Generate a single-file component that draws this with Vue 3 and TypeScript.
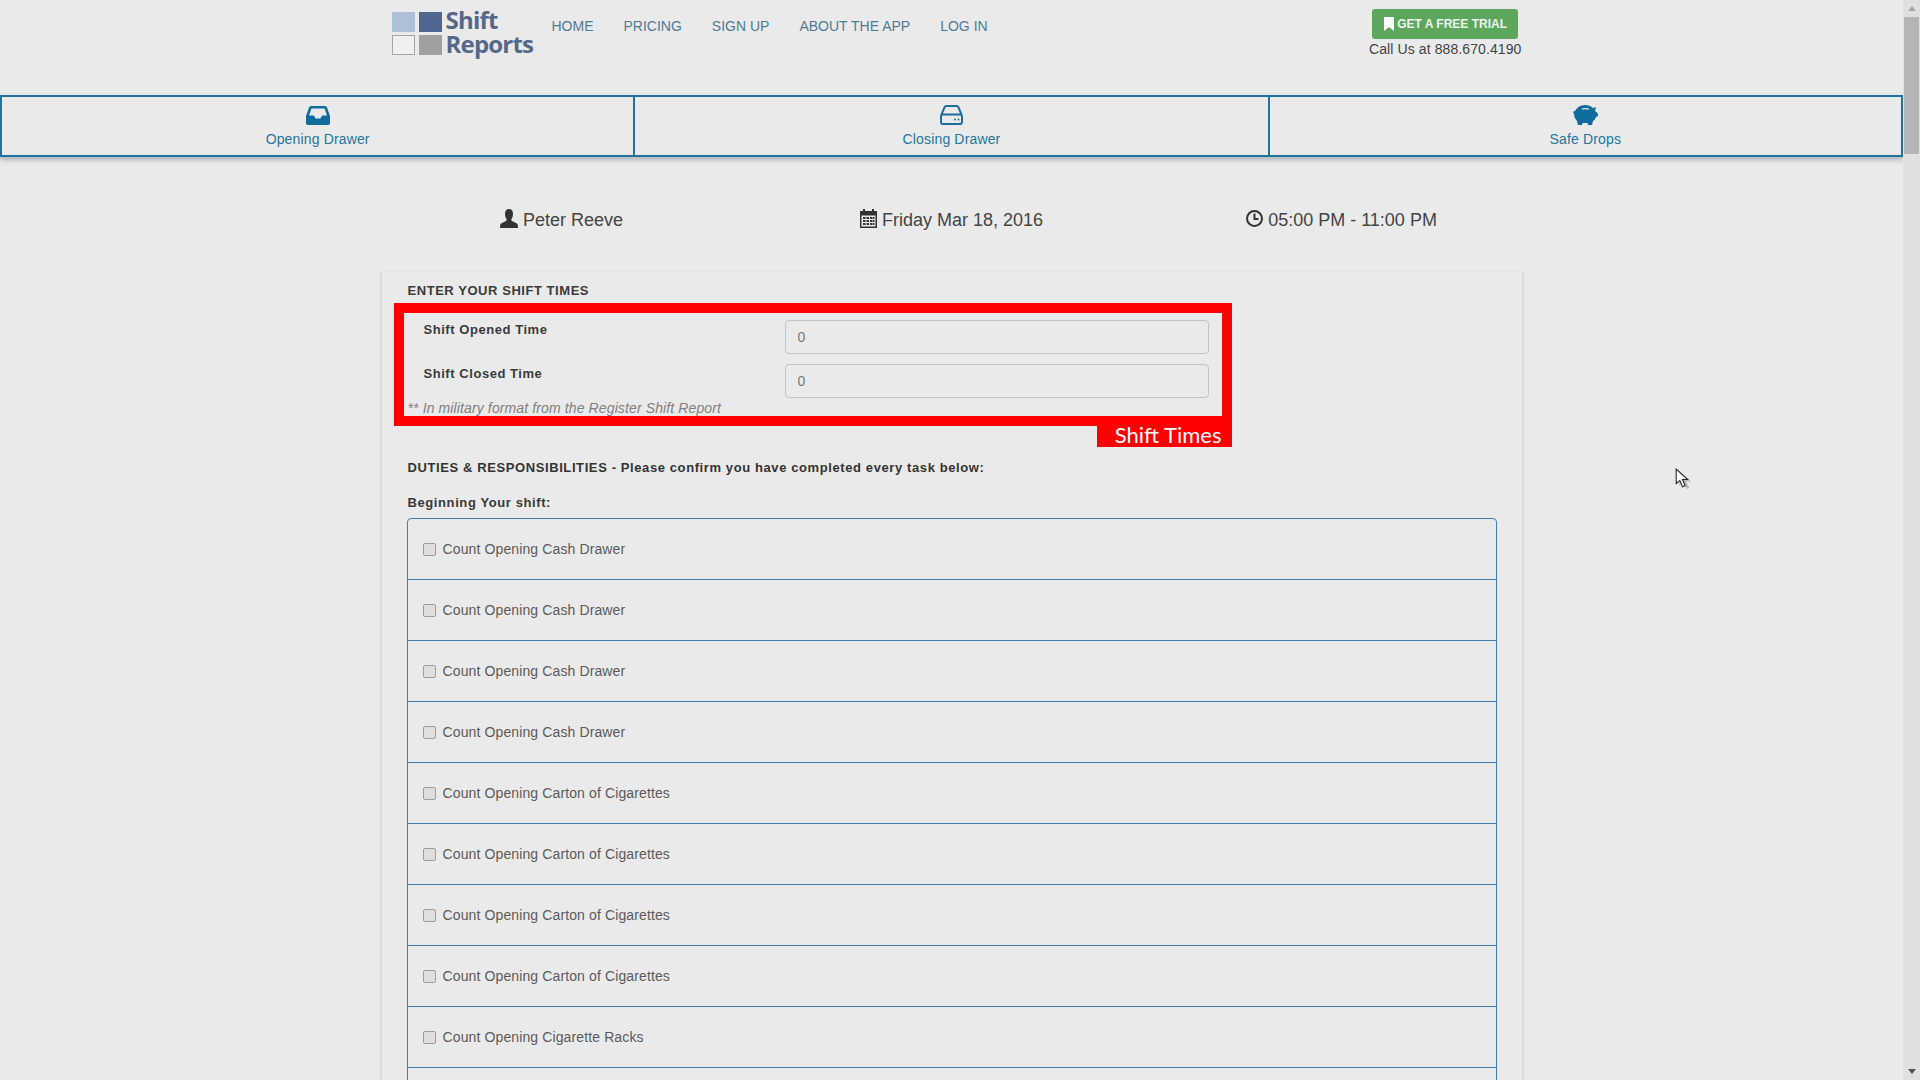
<script setup lang="ts">
const navLinks = ['HOME', 'PRICING', 'SIGN UP', 'ABOUT THE APP', 'LOG IN']

const tasks = [
  ...Array(4).fill('Count Opening Cash Drawer'),
  ...Array(4).fill('Count Opening Carton of Cigarettes'),
  ...Array(3).fill('Count Opening Cigarette Racks'),
] as string[]
</script>

<template>
  <div class="window">
    <div class="page">
      <header class="header">
        <div class="logo">
          <div class="logo-squares">
            <span class="sq sq-light"></span>
            <span class="sq sq-dark"></span>
            <span class="sq sq-empty"></span>
            <span class="sq sq-gray"></span>
          </div>
          <div class="logo-text">
            <span>Shift</span>
            <span>Reports</span>
          </div>
        </div>
        <nav class="nav">
          <a v-for="link in navLinks" :key="link" class="nav-link">{{ link }}</a>
        </nav>
        <div class="cta">
          <button class="trial-btn">
            <svg width="10" height="14" viewBox="0 0 10 14"><path d="M0 0h10v14L5 10 0 14z" fill="#fff" /></svg>
            GET A FREE TRIAL
          </button>
          <div class="call">Call Us at 888.670.4190</div>
        </div>
      </header>

      <div class="tabs">
        <div class="tab">
          <svg width="24" height="20" viewBox="0 0 24 20">
            <path
              fill="#0f6c9c"
              fill-rule="evenodd"
              d="M5 1h14q1.500 0 2 1.500L24 11v7q0 2-2 2H2q-2 0-2-2v-7l3-8.500Q3.500 1 5 1zM5.500 3.500 3 10.500h5l1.500 3h5l1.500-3h5l-2.500-7z"
            />
          </svg>
          <span>Opening Drawer</span>
        </div>
        <div class="tab">
          <svg width="23" height="20" viewBox="0 0 23 20">
            <path
              fill="none"
              stroke="#1b6f9c"
              stroke-width="2"
              d="M1.500 9.500 4.500 2.500Q5 1 6.500 1h10q1.500 0 2 1.500l3 7M3 9.500h17q2 0 2 2v5.500q0 2-2 2H3q-2 0-2-2v-5.500q0-2 2-2z"
            />
            <circle cx="15" cy="14.500" r="1" fill="#1b6f9c" />
            <circle cx="18.500" cy="14.500" r="1" fill="#1b6f9c" />
          </svg>
          <span>Closing Drawer</span>
        </div>
        <div class="tab">
          <svg width="25" height="20" viewBox="0 0 25 20">
            <path
              fill="#0f6c9c"
              fill-rule="evenodd"
              d="M12 0q5 0 8 3l3-1-1 4q2 1 3 3v2l-2 1q-1 3-3 4l-1 4h-4l-.5-2h-5l-.5 2H5l-1-4Q1 13 1 9L0 7q1-1 2-1 3-6 10-6zM9 3.500v1.300q3-1 7 0V3.500q-3.500-1-7 0z"
            />
          </svg>
          <span>Safe Drops</span>
        </div>
      </div>

      <main class="container">
        <div class="meta">
          <div class="meta-item">
            <svg width="18" height="19" viewBox="0 0 18 19">
              <path fill="#333" d="M9 0q4 0 4 5 0 3-1.500 5-.5 1 .5 2l5 2.500q1 .5 1 4.500H0q0-4 1-4.500L6 12q1-1 .5-2Q5 8 5 5q0-5 4-5z" />
            </svg>
            <span>Peter Reeve</span>
          </div>
          <div class="meta-item">
            <svg width="17" height="19" viewBox="0 0 17 19">
              <path fill="#333" fill-rule="evenodd" d="M3 0h2v2h7V0h2v2h3v17H0V2h3zM1.500 6.500v11h14v-11zM3 8h2.500v2H3zm3.500 0H9v2H6.500zM10 8h2.500v2H10zm3 0h1.500v2H13zM3 11h2.500v2H3zm3.500 0H9v2H6.500zM10 11h2.500v2H10zm3 0h1.500v2H13zM3 14h2.500v2H3zm3.500 0H9v2H6.500zM10 14h2.500v2H10zm3 0h1.500v2H13z" />
            </svg>
            <span>Friday Mar 18, 2016</span>
          </div>
          <div class="meta-item">
            <svg width="17" height="17" viewBox="0 0 17 17">
              <circle cx="8.500" cy="8.500" r="7.500" fill="none" stroke="#333" stroke-width="2" />
              <path d="M8.500 3.500v5.500h4" fill="none" stroke="#333" stroke-width="2" />
            </svg>
            <span>05:00 PM - 11:00 PM</span>
          </div>
        </div>

        <section class="card">
          <h4 class="section-title">ENTER YOUR SHIFT TIMES</h4>
          <div class="form-row">
            <label class="form-label">Shift Opened Time</label>
            <input class="form-input" type="text" value="0" />
          </div>
          <div class="form-row">
            <label class="form-label">Shift Closed Time</label>
            <input class="form-input" type="text" value="0" />
          </div>
          <p class="hint">** In military format from the Register Shift Report</p>

          <div class="callout">
            <span class="callout-label">Shift Times</span>
          </div>

          <h4 class="duties-title">DUTIES &amp; RESPONSIBILITIES - Please confirm you have completed every task below:</h4>
          <h5 class="list-title">Beginning Your shift:</h5>
          <ul class="task-list">
            <li v-for="(task, i) in tasks" :key="i" class="task">
              <input type="checkbox" disabled />
              <span>{{ task }}</span>
            </li>
          </ul>
        </section>
      </main>
    </div>

    <aside class="scrollbar">
      <span class="arrow arrow-up"></span>
      <span class="thumb"></span>
      <span class="arrow arrow-down"></span>
    </aside>

    <svg class="cursor" width="16" height="22" viewBox="0 0 15 21">
      <path d="M2 2v14l4-3 3 6 2.500-1-3-6h5z" fill="#888" opacity=".5" transform="translate(2 1)" />
      <path d="M1 1v14l3.500-3 2.500 6 2.500-1-2.500-6h5z" fill="#fff" stroke="#222" stroke-width="1" />
    </svg>
  </div>
</template>

<style>
html,
body {
  margin: 0;
  height: 100%;
  overflow: hidden;
  background: #eaeaea;
}
</style>

<style scoped>
.window {
  position: relative;
  display: flex;
  height: 1080px;
  overflow: hidden;
  background: #eaeaea;
  font-family: "Liberation Sans", Arial, sans-serif;
  color: #333;
}

.page {
  flex: 1;
  min-width: 0;
}

.header {
  box-sizing: border-box;
  width: 1170px;
  height: 95px;
  margin: 0 auto;
  padding: 12px 15px 0 25px;
  display: flex;
  align-items: flex-start;
}

.logo {
  display: flex;
  gap: 4px;
  width: 160px;
}

.logo-squares {
  display: grid;
  grid-template-columns: 23px 23px;
  grid-auto-rows: 20px;
  gap: 3px 4px;
}

.sq-light {
  background: #aec0d8;
}

.sq-dark {
  background: #4f6690;
}

.sq-empty {
  box-sizing: border-box;
  border: 1px solid #a5a5a5;
  background: #f0f0f0;
}

.sq-gray {
  background: #a0a0a0;
}

.logo-text {
  display: flex;
  flex-direction: column;
  margin-top: -4px;
  font-family: "Open Sans", sans-serif;
  font-weight: 700;
  font-size: 24px;
  line-height: 24px;
  letter-spacing: -0.8px;
  color: #56688a;
}

.nav {
  display: flex;
  gap: 30px;
  padding-top: 6px;
  flex: 1;
}

.nav-link {
  font-size: 14px;
  line-height: 16px;
  color: #4f7a97;
}

.cta {
  display: flex;
  flex-direction: column;
  align-items: center;
  margin-top: -3px;
  margin-right: 0;
}

.trial-btn {
  display: flex;
  align-items: center;
  gap: 3px;
  width: 146px;
  height: 30px;
  padding: 0 0 0 12px;
  border: none;
  border-radius: 3px;
  background: #5ca75c;
  color: #edf4ed;
  font-family: "Liberation Sans", Arial, sans-serif;
  font-size: 12px;
  font-weight: 700;
  letter-spacing: 0;
}

.call {
  margin-top: 2px;
  font-size: 14px;
  line-height: 16px;
  letter-spacing: 0.1px;
  color: #444;
}

.tabs {
  display: grid;
  grid-template-columns: repeat(3, 1fr);
  box-shadow: 0 3px 5px rgba(60, 80, 100, 0.35);
}

.tab {
  box-sizing: border-box;
  height: 62px;
  display: flex;
  flex-direction: column;
  align-items: center;
  padding-top: 8px;
  border: 2px solid #22739c;
  border-left-width: 1px;
  border-right-width: 1px;
  font-size: 14px;
  letter-spacing: 0.15px;
  color: #22769f;
}

.tab:first-child {
  border-left-width: 2px;
}

.tab:last-child {
  border-right-width: 2px;
}

.tab span {
  margin-top: 6px;
  line-height: 16px;
}

.container {
  box-sizing: border-box;
  width: 1170px;
  margin: 0 auto;
  padding: 0 15px;
}

.meta {
  display: grid;
  grid-template-columns: repeat(3, 1fr);
  height: 115px;
  margin: 0 -15px;
  align-items: flex-start;
  padding-top: 51px;
  box-sizing: border-box;
}

.meta-item {
  display: flex;
  justify-content: center;
  align-items: center;
  gap: 5px;
  font-size: 18px;
  line-height: 24px;
  color: #444;
}

.meta-item svg {
  margin-top: -3px;
}

.card {
  position: relative;
  box-sizing: border-box;
  height: 900px;
  margin: 0 -2px;
  padding: 11px 24px 0 26px;
  border-left: 2px solid #dedede;
  border-right: 2px solid #dedede;
  box-shadow: 0 -1px 3px rgba(0, 0, 0, 0.04);
}

.section-title {
  margin: 0 0 23px;
  font-size: 13px;
  line-height: 16px;
  font-weight: 700;
  letter-spacing: 0.55px;
  color: #3a3a3a;
}

.form-row {
  display: flex;
  align-items: flex-start;
  height: 44px;
  padding-left: 16px;
  margin-top: -2px;
}

.form-row + .form-row {
  margin-top: 0;
}

.form-label {
  width: 361px;
  font-size: 13px;
  line-height: 16px;
  font-weight: 700;
  letter-spacing: 0.55px;
  color: #3a3a3a;
  margin-top: 2px;
}

.form-input {
  box-sizing: border-box;
  width: 424px;
  height: 34px;
  padding: 0 12px;
  border: 1px solid #c2c2c2;
  border-radius: 4px;
  background: transparent;
  font-family: "Liberation Sans", Arial, sans-serif;
  font-size: 14px;
  color: #777;
}

.hint {
  margin: -8px 0 0;
  font-size: 14px;
  line-height: 16px;
  font-style: italic;
  letter-spacing: 0.12px;
  color: #808080;
}

.callout {
  position: absolute;
  left: 12px;
  top: 31px;
  box-sizing: border-box;
  width: 838px;
  height: 123px;
  border: 10px solid #f00;
  pointer-events: none;
}

.callout-label {
  position: absolute;
  right: -10px;
  top: 113px;
  box-sizing: border-box;
  width: 135px;
  height: 21px;
  padding-right: 10px;
  background: #f00;
  color: #fff;
  font-family: Lato, "Open Sans", sans-serif;
  font-size: 22px;
  line-height: 17px;
  text-align: right;
}

.duties-title {
  margin: 44px 0 0;
  font-size: 13px;
  line-height: 16px;
  font-weight: 700;
  letter-spacing: 0.6px;
  color: #333;
}

.list-title {
  margin: 19px 0 0;
  font-size: 13px;
  line-height: 16px;
  font-weight: 700;
  letter-spacing: 0.6px;
  color: #3a3a3a;
}

.task-list {
  margin: 7px 1px 0 -1px;
  padding: 0;
  list-style: none;
  border: 1px solid #3f7cb0;
  border-radius: 4px 4px 0 0;
}

.task {
  box-sizing: border-box;
  height: 61px;
  display: flex;
  align-items: center;
  gap: 7px;
  padding-left: 15px;
  border-bottom: 1px solid #3f7cb0;
  font-size: 14px;
  letter-spacing: 0.12px;
  color: #5a5a5a;
}

.task input {
  appearance: none;
  box-sizing: border-box;
  width: 13px;
  height: 13px;
  margin: 0;
  border: 1px solid #9c9c9c;
  border-radius: 2px;
  background: #dfdfdf;
}

.scrollbar {
  width: 17px;
  flex: none;
  display: flex;
  flex-direction: column;
  align-items: center;
  background: #e0e0e0;
}

.arrow {
  width: 0;
  height: 0;
  border-left: 4px solid transparent;
  border-right: 4px solid transparent;
}

.arrow-up {
  margin: 6px 0 6px;
  border-bottom: 5px solid #a5a5a5;
}

.arrow-down {
  margin: auto 0 6px;
  border-top: 5px solid #505050;
}

.thumb {
  width: 15px;
  height: 137px;
  background: #b5b5b5;
}

.cursor {
  position: absolute;
  left: 1675px;
  top: 468px;
}
</style>
